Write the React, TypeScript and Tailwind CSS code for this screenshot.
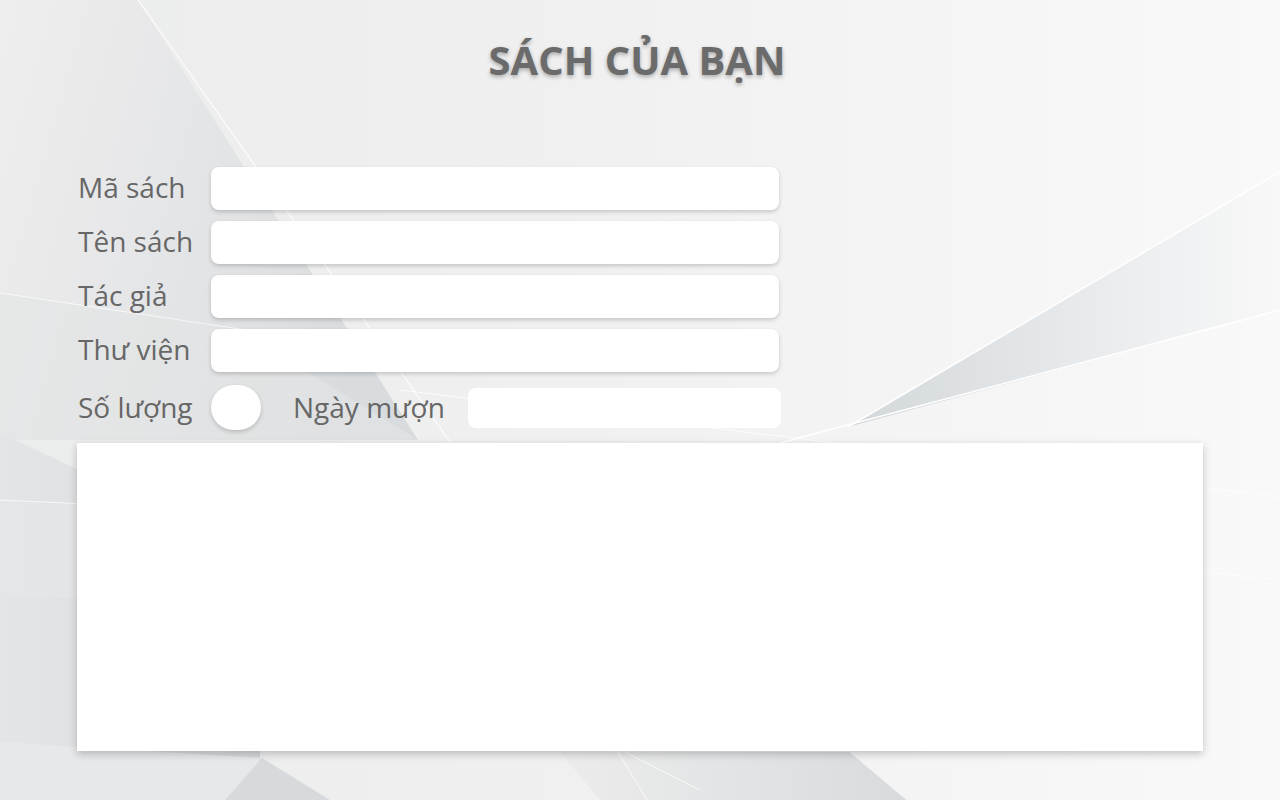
import * as React from 'react';

const fields = ['Mã sách', 'Tên sách', 'Tác giả', 'Thư viện'];

function Backdrop() {
  return (
    <svg
      className="pointer-events-none absolute inset-0"
      width="1280"
      height="800"
      viewBox="0 0 1280 800"
    >
      <defs>
        <linearGradient id="base" x1="0" y1="0" x2="1" y2="0">
          <stop offset="0" stopColor="#ebecec" />
          <stop offset="0.45" stopColor="#f0f0f0" />
          <stop offset="1" stopColor="#f9f9f9" />
        </linearGradient>
        <linearGradient id="leftTop" x1="0" y1="0" x2="1" y2="0.3">
          <stop offset="0" stopColor="#eeeeee" />
          <stop offset="0.6" stopColor="#e3e4e6" />
          <stop offset="1" stopColor="#d9dcde" />
        </linearGradient>
        <linearGradient id="wedge" x1="0" y1="0" x2="1" y2="0">
          <stop offset="0" stopColor="#d2d7da" />
          <stop offset="0.5" stopColor="#e6e9eb" />
          <stop offset="1" stopColor="#f8f8f8" />
        </linearGradient>
        <linearGradient id="lowLeft" x1="0" y1="0" x2="1" y2="0">
          <stop offset="0" stopColor="#e4e5e7" />
          <stop offset="1" stopColor="#d6d9dc" />
        </linearGradient>
        <linearGradient id="bottomMid" x1="0" y1="0" x2="1" y2="0">
          <stop offset="0" stopColor="#ececec" />
          <stop offset="1" stopColor="#d8dbdd" />
        </linearGradient>
      </defs>
      <rect width="1280" height="800" fill="url(#base)" />
      {/* left upper facet */}
      <polygon points="0,0 138,0 418,440 0,440" fill="url(#leftTop)" />
      <polygon points="0,293 240,330 418,440 0,440" fill="#e2e4e5" opacity="0.6" />
      <line x1="138" y1="0" x2="470" y2="470" stroke="#ffffff" strokeWidth="1.2" opacity="0.9" />
      <line x1="0" y1="293" x2="300" y2="338" stroke="#ffffff" strokeWidth="1" opacity="0.7" />
      {/* lower left */}
      <polygon points="0,433 260,555 260,760 0,742" fill="url(#lowLeft)" />
      <polygon points="0,500 260,515 260,600 0,598" fill="#e4e6e7" opacity="0.8" />
      <line x1="0" y1="500" x2="260" y2="512" stroke="#f7f7f7" strokeWidth="1" />
      <polygon points="0,742 262,758 225,800 0,800" fill="#e6e8e9" />
      <polygon points="262,758 225,800 330,800" fill="#d7dadd" />
      {/* bottom middle */}
      <polygon points="560,752 850,752 907,800 600,800" fill="url(#bottomMid)" />
      <line x1="850" y1="752" x2="907" y2="800" stroke="#f4f4f4" strokeWidth="1" />
      <line x1="618" y1="752" x2="647" y2="800" stroke="#ffffff" strokeWidth="1" opacity="0.8" />
      <line x1="625" y1="752" x2="700" y2="790" stroke="#ffffff" strokeWidth="1" opacity="0.8" />
      {/* right wedge */}
      <polygon points="848,427 1280,172 1280,310" fill="url(#wedge)" />
      <line x1="848" y1="427" x2="1280" y2="172" stroke="#ffffff" strokeWidth="1.5" />
      <line x1="780" y1="443" x2="1280" y2="310" stroke="#ffffff" strokeWidth="1.5" />
      <line x1="400" y1="390" x2="1280" y2="497" stroke="#ffffff" strokeWidth="1" opacity="0.8" />
      <line x1="1203" y1="572" x2="1280" y2="580" stroke="#ffffff" strokeWidth="1" opacity="0.7" />
    </svg>
  );
}

export default function App() {
  return (
    <div className="relative h-[800px] w-[1280px] overflow-hidden bg-[#f0f0f0] font-['Open_Sans',sans-serif]">
      <Backdrop />
      <div className="relative flex flex-col px-[77px]">
        <h1 className="mt-[32px] pr-[6px] text-center text-[40px] leading-[56px] font-bold text-[#6b6b6b] [text-shadow:0_2px_4px_rgba(0,0,0,0.3)]">
          SÁCH CỦA BẠN
        </h1>

        <div className="mt-[79px] flex flex-col gap-[11px]">
          {fields.map((label) => (
            <div key={label} className="flex items-center">
              <span className="w-[134px] pb-[4px] pl-px text-[28px] leading-none text-[#676767]">
                {label}
              </span>
              <div className="h-[43px] w-[568px] rounded-[8px] bg-white shadow-[0_2px_4px_rgba(0,0,0,0.18)]" />
            </div>
          ))}

          <div className="mt-[2px] flex items-center">
            <span className="w-[134px] pb-[2px] pl-px text-[28px] leading-none text-[#676767]">
              Số lượng
            </span>
            <div className="h-[45px] w-[50px] rounded-full bg-white shadow-[0_2px_4px_rgba(0,0,0,0.18)]" />
            <span className="ml-[32px] w-[175px] pb-[2px] text-[28px] leading-none text-[#676767]">
              Ngày mượn
            </span>
            <div className="h-[40px] w-[313px] rounded-[8px] bg-white" />
          </div>
        </div>

        <div className="mt-[13px] h-[308px] w-[1126px] bg-white shadow-[0_3px_8px_rgba(0,0,0,0.22)]" />
      </div>
    </div>
  );
}
